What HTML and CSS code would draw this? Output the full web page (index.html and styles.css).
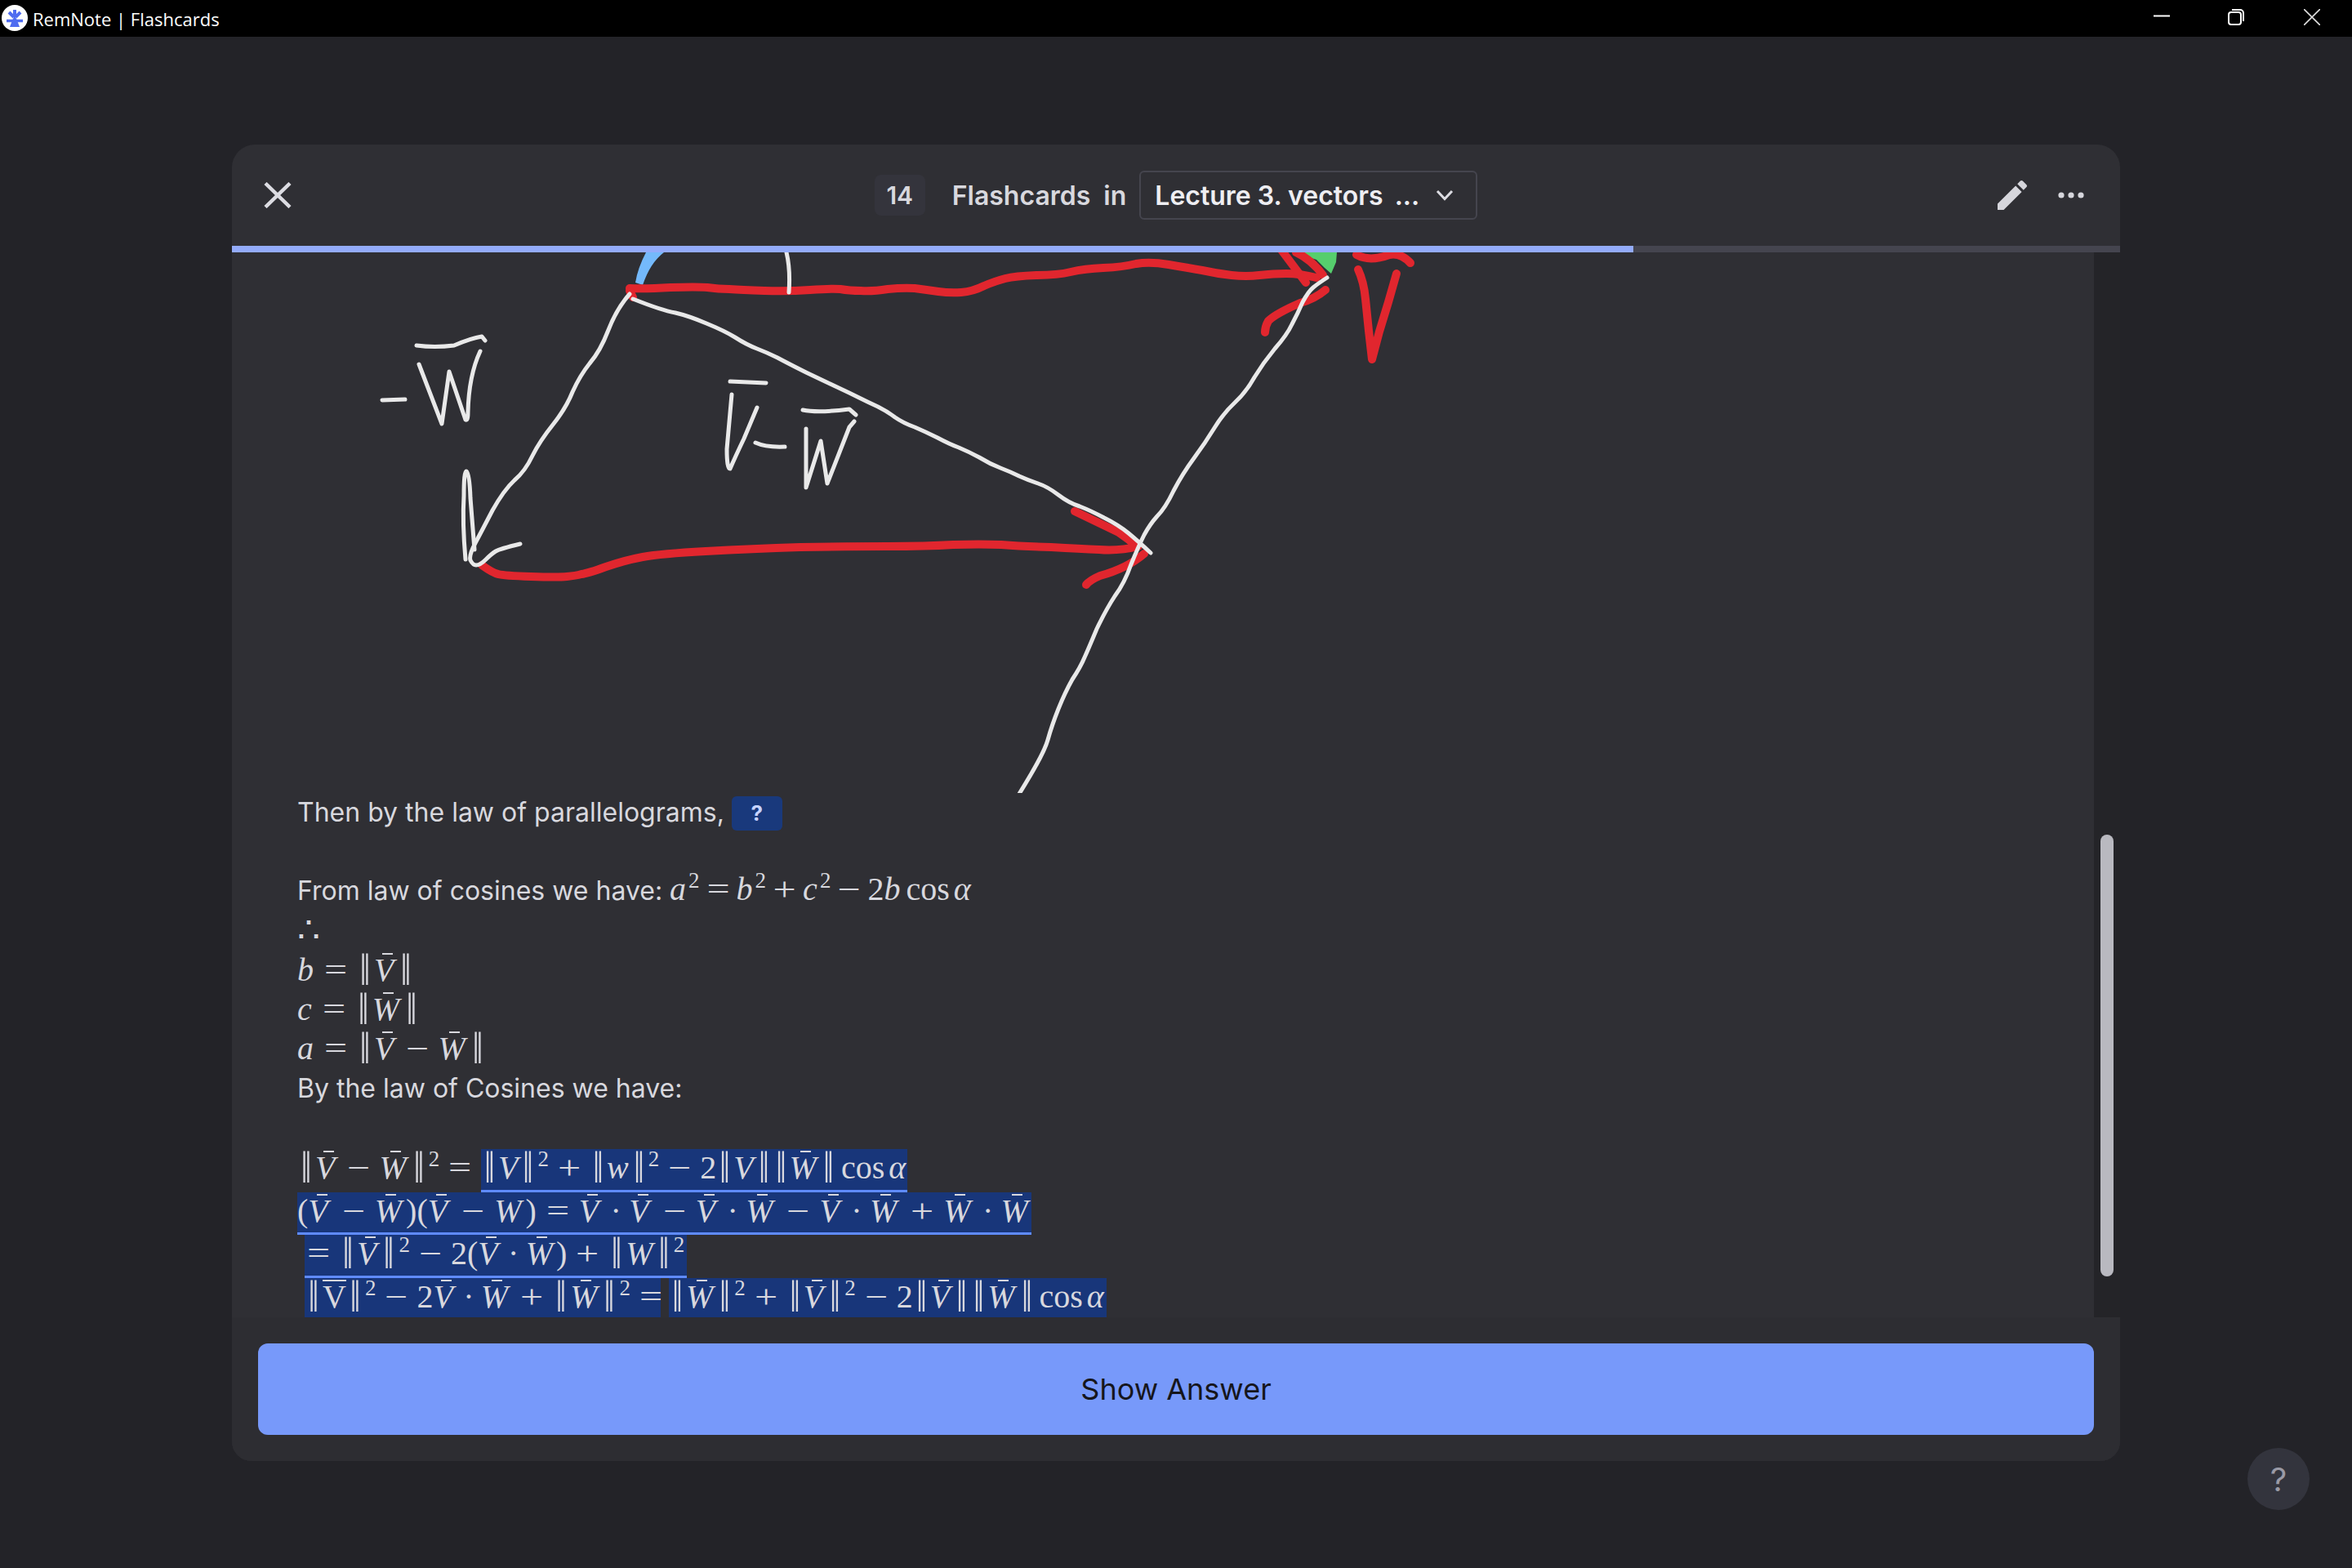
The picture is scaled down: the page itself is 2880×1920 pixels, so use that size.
FILE: index.html
```html
<!DOCTYPE html>
<html lang="en">
<head>
<meta charset="utf-8">
<title>RemNote | Flashcards</title>
<link rel="stylesheet" href="styles.css">
</head>
<body>
<header class="titlebar">
  <div class="app">
    <svg class="logo" viewBox="0 0 32 32"><circle cx="16" cy="16" r="16" fill="#fff"/><g fill="none" stroke="#4f6cf0" stroke-width="4"><path d="M16 6v9M9 9l6 6M23 9l-6 6"/><path d="M6 19.500h20" stroke-width="3.500"/></g><path fill="#4f6cf0" d="M16 13l3 6 3 8H10l3-8z"/></svg>
    <span class="app-name">RemNote | Flashcards</span>
  </div>
  <div class="winctl">
    <svg class="wicon wmin" viewBox="0 0 20 20"><path d="M0 9.500h20" stroke="#fff" stroke-width="2" fill="none"/></svg>
    <svg class="wicon" viewBox="0 0 20 20"><rect x="1" y="4" width="15" height="15" rx="3" stroke="#fff" stroke-width="2" fill="none"/><path d="M5 1h10a4 4 0 0 1 4 4v10" stroke="#fff" stroke-width="2" fill="none"/></svg>
    <svg class="wicon" viewBox="0 0 20 20"><path d="M0 0l20 20M20 0L0 20" stroke="#ddd" stroke-width="1.600" fill="none"/></svg>
  </div>
</header>

<main class="stage">
  <section class="modal">
    <div class="mhead">
      <div class="mleft">
        <svg class="close" viewBox="0 0 34 32"><path d="M2 1.500l30 29M32 1.500l-30 29" stroke="#dcdce2" stroke-width="4.500" fill="none"/></svg>
      </div>
      <div class="mcenter">
        <span class="count">14</span>
        <span class="label">Flashcards</span>
        <span class="label in">in</span>
        <div class="select">
          <span class="select-text">Lecture 3. vectors <span class="ell">...</span></span>
          <svg class="chev" viewBox="0 0 24 16"><path d="M3 3l9 9.500L21 3" stroke="#dcdce2" stroke-width="3" fill="none"/></svg>
        </div>
      </div>
      <div class="mright">
        <svg class="pencil" viewBox="0 0 24 24"><path fill="#d6d6dc" d="M3 17.250V21h3.750L17.810 9.940l-3.750-3.750L3 17.250zM20.710 7.040c.39-.39.39-1.020 0-1.410l-2.340-2.340c-.39-.39-1.020-.39-1.410 0l-1.830 1.830 3.750 3.750 1.830-1.830z"/></svg>
        <svg class="dots" viewBox="0 0 32 8"><circle cx="4" cy="4" r="3.600" fill="#d6d6dc"/><circle cx="16" cy="4" r="3.600" fill="#d6d6dc"/><circle cx="28" cy="4" r="3.600" fill="#d6d6dc"/></svg>
      </div>
    </div>
    <div class="progress"><div class="progress-fill"></div></div>

    <div class="mbody">
      <div class="scroll">
        <svg class="drawing" viewBox="284 309 2280 662" fill="none" stroke-linecap="round" stroke-linejoin="round">
          <path class="blue" d="M791 309L813 309Q796 322 787 349L778 346Q781 328 791 309Z"/>
          <path class="green" d="M1583 309L1637 309L1636 321L1630 335L1622 328L1612 318Z"/>
          <g class="red">
            <path d="M771 353Q790 354 821 352Q853 351 866 352Q880 354 893 354Q907 355 936 356Q965 357 992 355Q1019 353 1029 354Q1040 356 1054 356Q1068 357 1087 354Q1106 352 1120 353Q1135 355 1149 357Q1163 359 1177 358Q1191 357 1205 350Q1219 344 1231 341Q1243 338 1269 337Q1295 337 1311 333Q1328 329 1351 328Q1375 327 1391 323Q1408 320 1431 324Q1455 328 1472 331Q1490 335 1508 337Q1526 339 1542 337Q1559 335 1575 335Q1592 335 1612 340"/>
            <path d="M1569 306L1599 346"/>
            <path d="M1587 309Q1606 318 1620 337"/>
            <path d="M1623 355Q1610 366 1592 371Q1562 384 1553 393Q1549 400 1549 407"/>
            <path d="M1661 312Q1677 321 1701 312Q1715 309 1727 322"/>
            <path d="M1663 330Q1670 345 1672 366L1676 405L1680 440Q1684 425 1689 406L1700 370L1710 335"/>
            <path d="M1316 626Q1345 640 1370 652Q1382 660 1392 669"/>
            <path d="M1401 678Q1380 696 1347 705Q1335 710 1330 716"/>
            <path d="M590 692Q604 702 610 703Q617 705 650 706Q684 707 694 706Q705 705 712 703Q720 702 742 694Q765 686 787 682Q809 678 864 675Q920 672 980 670Q1040 669 1087 669Q1134 669 1167 667Q1200 666 1226 667Q1252 669 1287 670Q1323 672 1346 673Q1370 675 1394 669"/>
            <path d="M771 356L775 364"/>
          </g>
          <g class="white">
            <path d="M963 309Q968 330 966 358"/>
            <path d="M1625 340Q1614 347 1608 352Q1602 357 1595 370Q1589 384 1582 397Q1576 410 1561 427Q1547 444 1536 462Q1526 480 1512 493Q1498 506 1487 524Q1476 542 1462 561Q1448 580 1437 601Q1427 622 1417 632Q1408 642 1401 655Q1394 669 1385 691Q1377 714 1365 730Q1354 747 1343 770Q1333 794 1328 805Q1323 817 1313 832Q1304 848 1296 868Q1288 888 1283 906Q1278 924 1248 972"/>
            <path d="M775 366Q810 380 827 383Q844 387 865 396Q887 405 900 413Q914 422 927 427Q940 432 952 438Q965 445 987 456Q1010 467 1025 474Q1040 481 1052 487Q1064 493 1075 498Q1087 504 1096 511Q1106 518 1120 523Q1134 529 1148 536Q1163 544 1174 548Q1186 553 1199 560Q1212 568 1225 573Q1238 578 1248 583Q1259 588 1271 592Q1283 596 1296 606Q1309 616 1322 620Q1335 625 1352 634Q1370 643 1382 653Q1394 663 1409 677"/>
            <path d="M771 360Q755 378 745 404Q735 430 722 445Q710 460 701 480Q693 500 677 520Q661 540 652 558Q643 577 630 588Q617 600 603 625Q590 650 582 665Q574 680 576 686Q579 692 583 692Q588 692 595 685Q602 678 607 675Q612 672 637 666"/>
            <path d="M570 685Q566 640 568 607Q568 577 571 577Q575 580 576 610L581 673"/>
            <path d="M468 490L496 489"/>
            <path d="M510 423Q532 426 556 423Q577 414 590 412L594 417"/>
            <path d="M513 446L541 519L550 455L570 514Q573 516 573 505Q574 460 588 430"/>
            <path d="M894 467L938 469"/>
            <path d="M896 483L890 550Q890 574 894 574Q900 560 911 537L927 499"/>
            <path d="M925 542Q938 548 961 547"/>
            <path d="M983 502Q1001 506 1040 501L1048 508"/>
            <path d="M987 525L987 597L1005 540L1013 592L1040 523L1046 516"/>
          </g>
        </svg>

        <div class="txt">
          <p class="line">Then by the law of parallelograms, <span class="cloze">?</span></p>
          <p class="line"></p>
          <p class="line">From law of cosines we have: <span class="m m0"><i>a</i><sup>2</sup><span class="op">=</span><i>b</i><sup>2</sup><span class="op">+</span><i>c</i><sup>2</sup><span class="op">−</span>2<i>b</i><span class="cos">cos</span><i>α</i></span></p>
          <p class="line m therefore">∴</p>
          <p class="line m"><i>b</i><span class="op">=</span><span class="nm">‖</span><i class="b">V</i><span class="nm">‖</span></p>
          <p class="line m"><i>c</i><span class="op">=</span><span class="nm">‖</span><i class="b">W</i><span class="nm">‖</span></p>
          <p class="line m"><i>a</i><span class="op">=</span><span class="nm">‖</span><i class="b">V</i><span class="op">−</span><i class="b">W</i><span class="nm">‖</span></p>
          <p class="line by">By the law of Cosines we have:</p>
          <p class="line"></p>
          <div class="eq eq1 m">
            <span class="plain"><span class="nm">‖</span><i class="b">V</i><span class="op">−</span><i class="b">W</i><span class="nm">‖</span><sup>2</sup><span class="op">=</span></span>
            <span class="hl under hl1"><span class="nm">‖</span><i>V</i><span class="nm">‖</span><sup>2</sup><span class="op">+</span><span class="nm">‖</span><i>w</i><span class="nm">‖</span><sup>2</sup><span class="op">−</span>2<span class="nm">‖</span><i>V</i><span class="nm">‖</span><span class="nm">‖</span><i class="b">W</i><span class="nm">‖</span><span class="cos">cos</span><i>α</i></span>
          </div>
          <div class="eq eq2 m">
            <span class="hl under hl2">(<i class="b">V</i><span class="op">−</span><i class="b">W</i>)(<i class="b">V</i><span class="op">−</span><i>W</i>)<span class="op">=</span><i class="b">V</i><span class="dot">·</span><i class="b">V</i><span class="op">−</span><i class="b">V</i><span class="dot">·</span><i class="b">W</i><span class="op">−</span><i class="b">V</i><span class="dot">·</span><i class="b">W</i><span class="op">+</span><i class="b">W</i><span class="dot">·</span><i class="b">W</i></span>
          </div>
          <div class="eq eq3 m">
            <span class="hl under hl3"><span class="op first">=</span><span class="nm">‖</span><i class="b">V</i><span class="nm">‖</span><sup>2</sup><span class="op">−</span>2(<i class="b">V</i><span class="dot">·</span><i class="b">W</i>)<span class="op">+</span><span class="nm">‖</span><i>W</i><span class="nm">‖</span><sup>2</sup></span>
          </div>
          <div class="eq eq4 m">
            <span class="hl hl4"><span class="nm">‖</span><span class="b2">V</span><span class="nm">‖</span><sup>2</sup><span class="op">−</span>2<i class="b">V</i><span class="dot">·</span><i class="b">W</i><span class="op">+</span><span class="nm">‖</span><i class="b">W</i><span class="nm">‖</span><sup>2</sup><span class="op">=</span></span>
            <span class="hl hl5"><span class="nm">‖</span><i class="b">W</i><span class="nm">‖</span><sup>2</sup><span class="op">+</span><span class="nm">‖</span><i class="b">V</i><span class="nm">‖</span><sup>2</sup><span class="op">−</span>2<span class="nm">‖</span><i class="b">V</i><span class="nm">‖</span><span class="nm">‖</span><i class="b">W</i><span class="nm">‖</span><span class="cos">cos</span><i>α</i></span>
          </div>
        </div>
      </div>
      <div class="gutter"><div class="thumb"></div></div>
    </div>

    <div class="mfoot"><button class="answer">Show Answer</button></div>
  </section>
</main>
<div class="help">?</div>
</body>
</html>
```
FILE: styles.css
```css
* { box-sizing: border-box; }
html, body { margin: 0; height: 1920px; overflow: hidden; }
body { background: #232328; font-family: Inter, "Noto Sans", sans-serif; color: #d8d8de; display: flex; flex-direction: column; position: relative; }

.titlebar { height: 45px; background: #000; display: flex; justify-content: space-between; flex: none; }
.app { display: flex; align-items: center; padding-left: 2px; gap: 6px; }
.logo { width: 32px; height: 32px; margin-top: -1px; }
.app-name { font-family: "Open Sans", "Noto Sans", sans-serif; font-size: 22px; color: #fff; }
.winctl { display: flex; gap: 73px; padding: 11px 39px 0 0; }
.wicon { width: 20px; height: 20px; }
.wmin { margin-right: -2px; margin-top: -1px; }

.stage { flex: 1; padding-top: 132px; display: flex; justify-content: center; align-items: flex-start; }
.modal { width: 2312px; height: 1612px; background: #2f2f34; border-radius: 28px 28px 24px 24px; overflow: hidden; display: flex; flex-direction: column; }

.mhead { height: 124px; flex: none; display: grid; grid-template-columns: 1fr auto 1fr; align-items: center; }
.mleft { padding-left: 39px; display: flex; }
.close { width: 34px; height: 32px; }
.mcenter { display: flex; align-items: center; }
.count { width: 62px; height: 50px; border-radius: 8px; background: #34343c; display: flex; align-items: center; justify-content: center; font-size: 30px; font-weight: 600; margin-right: 33px; }
.label { font-size: 32px; font-weight: 600; }
.in { margin-left: 16px; margin-right: 16px; }
.select { width: 414px; height: 60px; border: 2px solid #45454e; border-radius: 6px; padding-left: 17px; display: flex; align-items: center; }
.select-text { font-size: 32px; font-weight: 600; color: #eeeef2; white-space: nowrap; width: 343px; }
.ell { margin-left: 6px; }
.chev { width: 24px; height: 16px; }
.mright { display: flex; justify-content: flex-end; align-items: center; padding-right: 44px; gap: 32px; }
.pencil { width: 48px; height: 48px; }
.dots { width: 32px; height: 8px; }

.progress { height: 8px; flex: none; background: #45454f; }
.progress-fill { width: 1716px; height: 8px; background: #93abfb; }

.mbody { height: 1304px; flex: none; display: flex; }
.scroll { width: 2280px; flex: none; }
.drawing { display: block; width: 2280px; height: 662px; }
.red path { stroke: #e1262e; stroke-width: 10; }
.white path { stroke: #e9e9e9; stroke-width: 5; }
.blue { fill: #74b9fb; }
.green { fill: #56ce6d; }

.txt { padding-left: 80px; font-size: 32px; }
.line { margin: 0; height: 48px; line-height: 48px; white-space: nowrap; }
.line.m { line-height: 50px; }
.by { margin-top: 2px; }
.cloze { display: inline-block; width: 62px; height: 42px; line-height: 42px; border-radius: 6px; background: #19397c; color: #c6d3ff; font-weight: 700; font-size: 26px; text-align: center; vertical-align: 1px; }

.m { font-family: "Liberation Serif", serif; font-size: 40px; }
.m sup { font-size: 27px; line-height: 0; vertical-align: 15px; margin-left: 1px; }
.m i { font-style: italic; letter-spacing: 2px; }
.op { display: inline-block; width: 50px; text-align: center; transform: scaleX(1.250); }
.op.first { margin-left: -8px; }
.dot { display: inline-block; width: 30px; text-align: center; }
.nm { display: inline-block; width: 22px; text-align: center; line-height: .8; transform: scale(1.200, 1.350); }
.cos { margin: 0 5px; }
.b, .b2 { position: relative; display: inline-block; line-height: 1; }
.m i.b { letter-spacing: 4px; }
.b::before { content: ""; position: absolute; left: 35%; top: -1px; width: 13px; height: 2px; background: currentColor; }
.b2::before { content: ""; position: absolute; left: 0; right: 0; top: -1px; height: 2px; background: currentColor; }
.therefore { font-size: 44px; }
.m0 { line-height: 1; }
.m0 .op { width: 45px; }

.eq { display: flex; align-items: flex-start; height: 52px; white-space: nowrap; line-height: 46px; }
.eq1 { height: 53px; margin-top: 2px; }
.eq2 .op { width: 52px; }
.eq2 .dot { width: 32px; }
.eq2 i.b, .eq2 i { letter-spacing: 5px; }
.eq3 { height: 53px; padding-left: 9px; }
.eq4 { height: 48px; padding-left: 9px; }
.plain { display: block; width: 225px; }
.hl { display: block; background: #18367a; height: 100%; }
.under { border-bottom: 3px solid #5f8bff; }
.hl1 { width: 522px; }
.hl1 .nm, .hl5 .nm { width: 21px; }
.hl2 { width: 899px; }
.hl3 { width: 468px; }
.hl4 { width: 436px; }
.hl5 { width: 536px; margin-left: 10px; }

.gutter { width: 32px; flex: none; background: #242428; padding: 713px 8px 0; }
.thumb { width: 16px; height: 541px; border-radius: 8px; background: #b9b9c0; }

.mfoot { flex: 1; padding: 32px; background: #2d2d32; display: flex; }
.answer { flex: 1; height: 112px; border: 0; border-radius: 12px; background: #7799fa; color: #16161c; font-family: Inter, sans-serif; font-size: 36px; }

.help { position: absolute; left: 2752px; top: 1773px; width: 76px; height: 76px; border-radius: 50%; background: #33343d; color: #9a9aa6; font-size: 40px; display: flex; align-items: center; justify-content: center; }
```
